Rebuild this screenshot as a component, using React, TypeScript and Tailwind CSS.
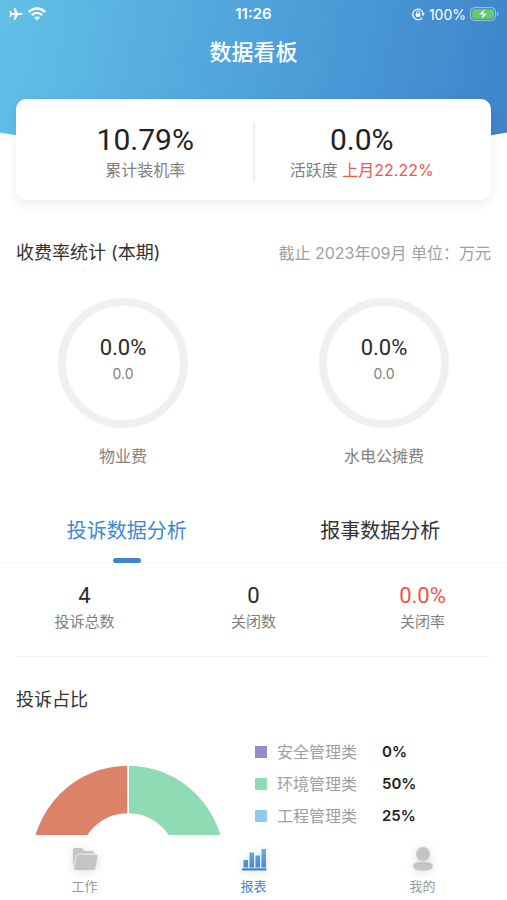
import { useState } from "react";
import type { ReactNode } from "react";

function AirplaneIcon() {
  return (
    <svg viewBox="0 0 24 24" className="size-4 rotate-90" fill="currentColor" aria-hidden="true">
      <path d="M21 15.500v-2.200L13.600 9V4.800C13.600 3.200 12.900 2.200 12 2.200s-1.600 1-1.600 2.600V9L3 13.300v2.200l7.400-1.800v4.400L7.600 20.200v1.700l4.400-1 4.400 1v-1.700l-2.800-2.100v-4.400z" />
    </svg>
  );
}

function WifiIcon() {
  return (
    <svg viewBox="0 0 18 14" className="h-[14px] w-[18px]" fill="none" stroke="currentColor" strokeWidth="2.3" aria-hidden="true">
      <path d="M.9 5.1C5.4.3 12.6.3 17.1 5.1" />
      <path d="M3.8 8.1c3-3 7.4-3 10.4 0" />
      <path d="M9 13.6 6 10.6c1.8-1.5 4.2-1.5 6 0z" fill="currentColor" stroke="none" />
    </svg>
  );
}

function RotationLockIcon() {
  return (
    <svg viewBox="0 0 14 14" className="size-[14px]" fill="none" stroke="currentColor" aria-hidden="true">
      <path d="M11.3 10.6A5.3 5.3 0 1 1 12.3 7" strokeWidth="1.2" />
      <path d="M10.4 6.6h3.4L12.1 9z" fill="currentColor" stroke="none" />
      <rect x="4.7" y="6.4" width="4.6" height="3.4" rx=".6" fill="currentColor" stroke="none" />
      <path d="M5.6 6.6V5.4a1.4 1.4 0 0 1 2.8 0v1.2" strokeWidth="1" />
    </svg>
  );
}

function BatteryIcon() {
  return (
    <svg viewBox="0 0 29 14" className="h-[14px] w-[29px]" aria-hidden="true">
      <rect x=".6" y=".6" width="25" height="12.8" rx="3.8" fill="none" stroke="#fff" strokeOpacity=".5" />
      <rect x="2.2" y="2.2" width="21.8" height="9.6" rx="2.2" fill="#63cf62" />
      <path d="M27 5v4c.9-.3 1.4-1.1 1.4-2S27.900 5.300 27 5z" fill="#fff" fillOpacity=".5" />
      <path d="M14.600 1.600 8.700 7.700h3.700l-1 4.900 6-6.300h-3.700z" fill="#fff" stroke="#4dac7b" strokeWidth=".5" />
    </svg>
  );
}

function FolderIcon() {
  return (
    <svg viewBox="0 0 26 24" className="h-6 w-[26px] drop-shadow-[0_1px_4px_rgba(0,0,0,0.14)]" fill="#c4c4c4" aria-hidden="true">
      <path d="M1 20.500V2.500C1 1.700 1.600 1 2.500 1h7c.6 0 1 .3 1.300.8L12 3.900h8.500c.8 0 1.500.7 1.500 1.500v1.100H6.600c-1.300 0-2.200.8-2.600 2z" />
      <path d="M6.900 7.700h17.200c1 0 1.600.8 1.400 1.700l-2.200 12c-.2 1-.9 1.600-1.900 1.600H3.500c-1 0-1.600-.8-1.400-1.700L4.800 9.200c.3-.9 1.100-1.500 2.100-1.500z" />
    </svg>
  );
}

function ChartIcon() {
  return (
    <svg viewBox="0 0 26 24" className="h-6 w-[26px] drop-shadow-[0_1px_4px_rgba(0,0,0,0.14)]" aria-hidden="true">
      <defs>
        <linearGradient id="bars" x1="0" y1="0" x2="0" y2="24" gradientUnits="userSpaceOnUse">
          <stop offset="0" stopColor="#62b9e3" />
          <stop offset="1" stopColor="#3f84c8" />
        </linearGradient>
      </defs>
      <g fill="url(#bars)">
        <rect x="2.500" y="13" width="4.500" height="7.500" />
        <rect x="8.500" y="5.500" width="4.500" height="15" />
        <rect x="14.500" y="8.500" width="4.500" height="12" />
        <rect x="20.500" y="2" width="4.500" height="18.500" />
        <rect x="1" y="21.300" width="24.500" height="2.300" rx=".5" />
      </g>
    </svg>
  );
}

function PersonIcon() {
  return (
    <svg viewBox="0 0 26 24" className="h-6 w-[26px] drop-shadow-[0_1px_4px_rgba(0,0,0,0.14)]" fill="#c4c4c4" aria-hidden="true">
      <circle cx="13" cy="7" r="6.900" />
      <path d="M13 14.900c6.500 0 9.800 1 9.800 4.200s-3.300 4.500-9.800 4.500-9.800-1.300-9.800-4.500 3.300-4.200 9.800-4.200z" />
    </svg>
  );
}

function Headline({ value, children }: { value: string; children: ReactNode }) {
  return (
    <div className="flex flex-1 flex-col text-center">
      <div className="font-['Roboto',sans-serif] text-[30px] leading-9 text-[#222]">{value}</div>
      <div className="text-[16px] leading-6 text-[#808080]">{children}</div>
    </div>
  );
}

function Ring({ percent, amount, label }: { percent: string; amount: string; label: string }) {
  return (
    <div className="flex flex-col items-center gap-4">
      <div className="flex size-[130px] flex-col items-center justify-center rounded-full border-8 border-[#f0f0f0] pb-1.5">
        <div className="font-['Roboto',sans-serif] text-[22px] leading-7 text-[#2b2b2b]">{percent}</div>
        <div className="text-[14px] leading-6 text-[#808080]">{amount}</div>
      </div>
      <div className="text-[16px] leading-6 text-[#808080]">{label}</div>
    </div>
  );
}

function Stat({ value, label, alert = false }: { value: string; label: string; alert?: boolean }) {
  return (
    <div className="flex flex-col items-center">
      <div
        className={
          alert
            ? "font-['Roboto',sans-serif] text-[22px] leading-7 text-[#e9584b]"
            : "font-['Roboto',sans-serif] text-[22px] leading-7 text-[#2b2b2b]"
        }
      >
        {value}
      </div>
      <div className="text-[15px] leading-6 text-[#808080]">{label}</div>
    </div>
  );
}

const tabs = ["投诉数据分析", "报事数据分析"];

const legend = [
  { label: "安全管理类", value: "0%", swatch: "bg-[#9a88cb]" },
  { label: "环境管理类", value: "50%", swatch: "bg-[#8edbb4]" },
  { label: "工程管理类", value: "25%", swatch: "bg-[#92cbe8]" },
];

const navItems: { label: string; icon: ReactNode; active?: boolean }[] = [
  { label: "工作", icon: <FolderIcon /> },
  { label: "报表", icon: <ChartIcon />, active: true },
  { label: "我的", icon: <PersonIcon /> },
];

export default function App() {
  const [tab, setTab] = useState(0);

  return (
    <div lang="zh-CN" className="flex h-screen flex-col bg-white font-['Inter','Noto_Sans_CJK_SC',sans-serif]">
      <main className="min-h-0 flex-1 overflow-y-auto [scrollbar-width:none]">
        <header className="h-[153px] bg-[linear-gradient(100deg,#62c0e7_0%,#4fa2db_50%,#3f84c9_100%)] text-white [clip-path:ellipse(100%_100%_at_50%_0)]">
          <div className="grid h-7 grid-cols-3 items-center px-2 text-[14px]">
            <div className="flex items-center gap-1">
              <AirplaneIcon />
              <WifiIcon />
            </div>
            <div className="text-center text-[15px] font-semibold">11:26</div>
            <div className="flex items-center justify-end gap-1">
              <RotationLockIcon />
              <span>100%</span>
              <BatteryIcon />
            </div>
          </div>
          <h1 className="text-center text-[22px] leading-[48px] font-medium">数据看板</h1>
        </header>

        <section className="relative mx-4 -mt-[54px] flex items-center rounded-[10px] bg-white px-[22px] pt-[23px] pb-[18px] shadow-[0_4px_12px_rgba(0,0,0,0.08)]">
          <Headline value="10.79%">累计装机率</Headline>
          <div className="h-[60px] w-0.5 bg-[#f0f0f0]" />
          <Headline value="0.0%">
            活跃度 <span className="text-[#e9584b]">上月22.22%</span>
          </Headline>
        </section>

        <section className="pt-[39px]">
          <div className="flex items-center justify-between px-4 leading-7">
            <h2 className="text-[18px] text-[#333]">收费率统计 (本期)</h2>
            <span className="text-[16px] text-[#a0a0a0]">截止 2023年09月 单位：万元</span>
          </div>
          <div className="flex justify-between px-[58px] pt-[31px]">
            <Ring percent="0.0%" amount="0.0" label="物业费" />
            <Ring percent="0.0%" amount="0.0" label="水电公摊费" />
          </div>
        </section>

        <div role="tablist" className="mt-[30px] grid grid-cols-2 border-b border-[#f7f7f7]">
          {tabs.map((name, i) => (
            <button
              key={name}
              type="button"
              role="tab"
              aria-selected={tab === i}
              onClick={() => setTab(i)}
              className={
                tab === i
                  ? "relative h-16 pt-0.5 text-[20px] text-[#4089cf]"
                  : "relative h-16 pt-0.5 text-[20px] text-[#333]"
              }
            >
              {name}
              {tab === i && (
                <span className="absolute -bottom-px left-1/2 h-[5px] w-7 -translate-x-1/2 rounded-full bg-[#3d85c9]" />
              )}
            </button>
          ))}
        </div>

        <section className="mx-4 border-b border-[#f3f3f3] pt-[19px] pb-[22px]">
          <div className="-mx-4 grid grid-cols-3">
            <Stat value="4" label="投诉总数" />
            <Stat value="0" label="关闭数" />
            <Stat value="0.0%" label="关闭率" alert />
          </div>
        </section>

        <section className="pt-[29px]">
          <h2 className="px-4 text-[18px] leading-7 text-[#333]">投诉占比</h2>
          <div className="flex items-start gap-[30px] pt-[22px] pl-[31px]">
            <svg viewBox="-97 -97 194 194" className="mt-[29px] size-[194px] shrink-0" stroke="#fff" strokeWidth="1.5" role="img" aria-label="投诉占比">
              <path d="M0-97A97 97 0 0 1 0 97V48A48 48 0 0 0 0-48z" fill="#8edbb4" />
              <path d="M0 97A97 97 0 0 1-97 0H-48A48 48 0 0 0 0 48z" fill="#92cbe8" />
              <path d="M-97 0A97 97 0 0 1 0-97V-48A48 48 0 0 0-48 0z" fill="#db8268" />
            </svg>
            <ul>
              {legend.map((item) => (
                <li key={item.label} className="flex h-8 items-center gap-[10px] text-[16px]">
                  <span className={`size-3 ${item.swatch}`} />
                  <span className="w-[95px] text-[#a0a0a0]">{item.label}</span>
                  <span className="text-[15px] font-semibold text-[#222]">{item.value}</span>
                </li>
              ))}
            </ul>
          </div>
        </section>
      </main>

      <nav className="grid grid-cols-3 bg-white pt-3 pb-1">
        {navItems.map((item) => (
          <a
            key={item.label}
            href="#"
            aria-current={item.active ? "page" : undefined}
            className={
              item.active
                ? "flex flex-col items-center gap-[5px] text-[13px] leading-5 text-[#4089cf]"
                : "flex flex-col items-center gap-[5px] text-[13px] leading-5 text-[#999]"
            }
          >
            {item.icon}
            {item.label}
          </a>
        ))}
      </nav>
    </div>
  );
}
